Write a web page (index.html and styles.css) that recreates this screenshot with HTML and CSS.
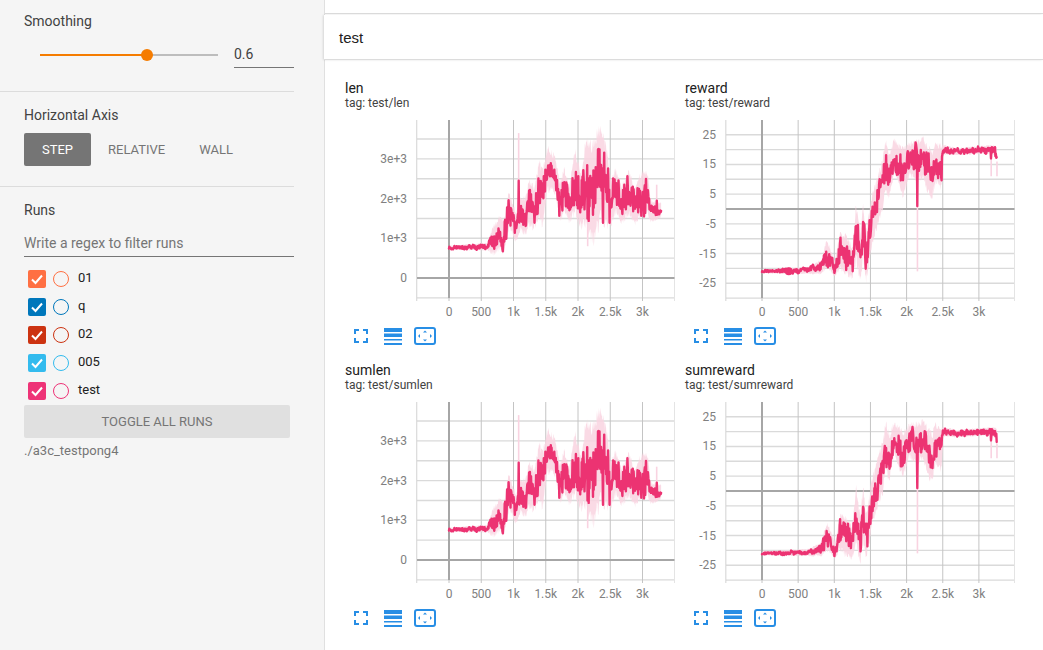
FILE: index.html
```html
<!DOCTYPE html>
<html lang="en">
<head>
    <meta charset="UTF-8">
    <title>TensorBoard</title>
    <link rel="stylesheet" href="styles.css">
</head>
<body>
    <svg class="icon-defs" width="0" height="0">
        <symbol id="icon-fit" viewBox="0 0 14 14">
            <path d="M1 5V1h4M9 1h4v4M13 9v4H9M5 13H1V9" fill="none" stroke="currentColor" stroke-width="2"/>
        </symbol>
        <symbol id="icon-lines" viewBox="0 0 18 17">
            <path d="M0 0h18v4H0zM0 5.5h18v3.5H0zM0 11h18v1.5H0zM0 15h18v2H0z" fill="currentColor"/>
        </symbol>
        <symbol id="icon-zoom" viewBox="0 0 22 18">
            <rect x="1" y="1" width="20" height="16" rx="2" fill="none" stroke="currentColor" stroke-width="2"/>
            <path d="M11 3.5l2 2H9zM11 14.5l2-2H9zM4 9l2-2v4zM18 9l-2-2v4z" fill="currentColor"/>
        </symbol>
    </svg>

    <aside class="sidebar">
        <section class="side-section smoothing">
            <div class="side-label">Smoothing</div>
            <div class="slider-row">
                <div class="slider">
                    <div class="slider-fill"></div>
                    <div class="slider-rest"></div>
                    <div class="slider-knob"></div>
                </div>
                <div class="slider-value">0.6</div>
            </div>
        </section>

        <section class="side-section axis">
            <div class="side-label">Horizontal Axis</div>
            <div class="axis-buttons">
                <div class="axis-btn active">STEP</div>
                <div class="axis-btn">RELATIVE</div>
                <div class="axis-btn">WALL</div>
            </div>
        </section>

        <section class="side-section runs">
            <div class="side-label">Runs</div>
            <div class="run-filter">Write a regex to filter runs</div>
            <div class="run-row run-01">
                <span class="run-check"><svg viewBox="0 0 18 18"><path d="M4 9.5l3.5 3.5L14 5.5"/></svg></span>
                <span class="run-dot"></span>
                <span class="run-name">01</span>
            </div>
            <div class="run-row run-q">
                <span class="run-check"><svg viewBox="0 0 18 18"><path d="M4 9.5l3.5 3.5L14 5.5"/></svg></span>
                <span class="run-dot"></span>
                <span class="run-name">q</span>
            </div>
            <div class="run-row run-02">
                <span class="run-check"><svg viewBox="0 0 18 18"><path d="M4 9.5l3.5 3.5L14 5.5"/></svg></span>
                <span class="run-dot"></span>
                <span class="run-name">02</span>
            </div>
            <div class="run-row run-005">
                <span class="run-check"><svg viewBox="0 0 18 18"><path d="M4 9.5l3.5 3.5L14 5.5"/></svg></span>
                <span class="run-dot"></span>
                <span class="run-name">005</span>
            </div>
            <div class="run-row run-test">
                <span class="run-check"><svg viewBox="0 0 18 18"><path d="M4 9.5l3.5 3.5L14 5.5"/></svg></span>
                <span class="run-dot"></span>
                <span class="run-name">test</span>
            </div>
            <div class="toggle-runs">TOGGLE ALL RUNS</div>
            <div class="log-dir">./a3c_testpong4</div>
        </section>
    </aside>

    <main class="main">
        <div class="top-strip"></div>
        <div class="pane-header">test</div>
        <div class="chart-grid">
            <div class="chart-card">
                <div class="chart-title">len</div>
                <div class="chart-tag">tag: test/len</div>
                <svg class="chart" id="chart-len" width="335" height="208"></svg>
                <div class="chart-tools">
                    <svg class="tool tool-fit"><use href="#icon-fit"/></svg>
                    <svg class="tool tool-lines"><use href="#icon-lines"/></svg>
                    <svg class="tool tool-zoom"><use href="#icon-zoom"/></svg>
                </div>
            </div>
            <div class="chart-card">
                <div class="chart-title">reward</div>
                <div class="chart-tag">tag: test/reward</div>
                <svg class="chart" id="chart-reward" width="335" height="208"></svg>
                <div class="chart-tools">
                    <svg class="tool tool-fit"><use href="#icon-fit"/></svg>
                    <svg class="tool tool-lines"><use href="#icon-lines"/></svg>
                    <svg class="tool tool-zoom"><use href="#icon-zoom"/></svg>
                </div>
            </div>
            <div class="chart-card">
                <div class="chart-title">sumlen</div>
                <div class="chart-tag">tag: test/sumlen</div>
                <svg class="chart" id="chart-sumlen" width="335" height="208"></svg>
                <div class="chart-tools">
                    <svg class="tool tool-fit"><use href="#icon-fit"/></svg>
                    <svg class="tool tool-lines"><use href="#icon-lines"/></svg>
                    <svg class="tool tool-zoom"><use href="#icon-zoom"/></svg>
                </div>
            </div>
            <div class="chart-card">
                <div class="chart-title">sumreward</div>
                <div class="chart-tag">tag: test/sumreward</div>
                <svg class="chart" id="chart-sumreward" width="335" height="208"></svg>
                <div class="chart-tools">
                    <svg class="tool tool-fit"><use href="#icon-fit"/></svg>
                    <svg class="tool tool-lines"><use href="#icon-lines"/></svg>
                    <svg class="tool tool-zoom"><use href="#icon-zoom"/></svg>
                </div>
            </div>
        </div>
    </main>

    <script src="charts.js"></script>
</body>
</html>
```

FILE: styles.css
```css
html, body {
    height: 100%;
}
body {
    margin: 0;
    display: flex;
    overflow: hidden;
    background-color: #fff;
    font-family: Roboto, sans-serif;
    color: #212121;
}
.icon-defs {
    position: absolute;
}

/* sidebar */
.sidebar {
    width: 324px;
    flex: none;
    background-color: #f5f5f5;
    border-right: 1px solid #e0e0e0;
}
.side-section {
    width: 294px;
    box-sizing: border-box;
    padding-left: 24px;
    border-bottom: 1px solid #dcdcdc;
}
.side-label {
    font-size: 14px;
    line-height: 16px;
    color: #424242;
}
.smoothing {
    height: 92px;
    padding-top: 13px;
}
.slider-row {
    display: flex;
    margin-top: 15px;
}
.slider {
    position: relative;
    display: flex;
    align-items: center;
    width: 178px;
    height: 22px;
    margin-left: 16px;
}
.slider-fill {
    width: 107px;
    height: 2px;
    background-color: #f57c00;
}
.slider-rest {
    flex: 1;
    height: 2px;
    background-color: #bdbdbd;
}
.slider-knob {
    position: absolute;
    left: 101px;
    top: 5px;
    width: 12px;
    height: 12px;
    border-radius: 50%;
    background-color: #f57c00;
}
.slider-value {
    width: 60px;
    height: 24px;
    box-sizing: border-box;
    margin-left: 16px;
    font-size: 14px;
    line-height: 20px;
    color: #424242;
    border-bottom: 1px solid #757575;
}
.axis {
    height: 95px;
    padding-top: 15px;
}
.axis-buttons {
    display: flex;
    margin-top: 10px;
}
.axis-btn {
    height: 33px;
    padding: 0 17px;
    font-size: 13px;
    line-height: 34px;
    color: #757575;
    border-radius: 2px;
}
.axis-btn.active {
    width: 67px;
    box-sizing: border-box;
    padding: 0;
    text-align: center;
    background-color: #757575;
    color: #fff;
}
.runs {
    padding-top: 15px;
    border-bottom: none;
}
.run-filter {
    height: 25px;
    box-sizing: border-box;
    margin-top: 14px;
    font-size: 14px;
    line-height: 22px;
    color: #757575;
    border-bottom: 1px solid #757575;
}
.run-filter + .run-row {
    margin-top: 8px;
}
.run-row {
    display: flex;
    align-items: center;
    height: 28px;
    padding-left: 4px;
    font-size: 13px;
}
.run-check {
    width: 18px;
    height: 18px;
    border-radius: 2px;
    background-color: var(--run-color);
}
.run-check svg {
    display: block;
    width: 18px;
    height: 18px;
    fill: none;
    stroke: #fff;
    stroke-width: 2;
}
.run-dot {
    width: 16px;
    height: 16px;
    box-sizing: border-box;
    margin-left: 7px;
    border: 1.5px solid var(--run-color);
    border-radius: 50%;
}
.run-name {
    margin-left: 9px;
    margin-top: -4px;
    color: #212121;
}
.run-01 { --run-color: #ff7043; }
.run-q { --run-color: #0077bb; }
.run-02 { --run-color: #cc3311; }
.run-005 { --run-color: #33bbee; }
.run-test { --run-color: #ee3377; }
.toggle-runs {
    width: 266px;
    height: 33px;
    font-size: 13px;
    line-height: 34px;
    text-align: center;
    color: #757575;
    background-color: #e0e0e0;
    border-radius: 2px;
}
.log-dir {
    margin-top: 5px;
    font-size: 13px;
    line-height: 16px;
    color: #757575;
}

/* main area */
.main {
    flex: 1;
    min-width: 0;
}
.top-strip {
    height: 13px;
    border-bottom: 1px solid #dcdcdc;
}
.pane-header {
    height: 44px;
    margin-top: 1px;
    margin-left: -1px;
    padding-left: 15px;
    font-family: "Liberation Sans", Arial, sans-serif;
    font-size: 15px;
    line-height: 46px;
    background-color: #fff;
    border-bottom: 1px solid #dcdcdc;
    box-shadow: -1px 0 2px rgba(0, 0, 0, 0.12);
}
.chart-grid {
    display: grid;
    grid-template-columns: 340px 340px;
    grid-auto-rows: 282px;
    padding: 20px 0 0 20px;
}
.chart-title {
    font-size: 14px;
    line-height: 16px;
}
.chart-tag {
    font-size: 12px;
    line-height: 14px;
    color: #424242;
}
.chart {
    display: block;
    margin-top: 2px;
}
.chart text {
    font-family: Roboto, sans-serif;
    font-size: 12px;
    fill: #808080;
}
.chart-tools {
    display: flex;
    align-items: center;
    height: 18px;
    margin-top: 7px;
    color: #288ee5;
}
.tool {
    flex: none;
}
.tool-fit {
    width: 14px;
    height: 14px;
    margin-left: 9px;
}
.tool-lines {
    width: 18px;
    height: 17px;
    margin-left: 16px;
}
.tool-zoom {
    width: 22px;
    height: 18px;
    margin-left: 12px;
}
```

FILE: charts.js
```js
// draws the four scalar charts, curves are generated from rough key points
const LINE = '#ec3372';
const PALE = '#f9d3e1';

const lenShape = {
    keys: [
        [0, 760, 25, 40], [600, 790, 40, 70], [680, 950, 130, 260], [730, 1000, 180, 280],
        [780, 1150, 200, 320], [850, 1000, 180, 300], [930, 1750, 230, 340], [1040, 1250, 130, 270],
        [1100, 1600, 170, 300], [1180, 1550, 170, 350], [1250, 1900, 260, 420], [1320, 1750, 240, 400],
        [1400, 2250, 320, 520], [1450, 2000, 330, 520], [1530, 2750, 140, 420], [1650, 2600, 150, 340],
        [1720, 1900, 280, 380], [1790, 2250, 300, 400], [1860, 1850, 220, 340], [1950, 2450, 420, 600],
        [2040, 1950, 330, 520], [2130, 2450, 520, 800], [2220, 2100, 420, 950], [2350, 2650, 520, 900],
        [2440, 2350, 520, 750], [2510, 1850, 260, 420], [2580, 2200, 280, 420], [2680, 1850, 220, 350],
        [2790, 2150, 280, 420], [2880, 1800, 200, 340], [2980, 2100, 300, 420], [3080, 2150, 240, 380],
        [3130, 1680, 90, 200], [3290, 1720, 80, 140]
    ],
    spikes: [[1080, 3650, 2450], [2150, 800, 1500], [3220, 2350, 1950]]
};

const rewardShape = {
    keys: [
        [0, -21, 0.3, 0.5], [650, -20.7, 0.5, 0.9], [820, -19.5, 1, 1.8], [895, -15, 2, 3.5],
        [1010, -20, 1.2, 2], [1080, -14, 2.8, 4.5], [1150, -15, 3, 5], [1250, -18, 2.5, 4],
        [1300, -8, 4, 7], [1360, -16, 3, 6], [1400, -7, 3.5, 7], [1440, -16, 3.5, 6],
        [1520, -4, 3, 6], [1600, 3, 3, 6], [1670, 8, 3, 6.5], [1710, 15, 3.5, 6],
        [1760, 11, 3, 6], [1830, 18, 2.5, 4], [1950, 12, 3.5, 6], [2040, 17, 2.5, 4],
        [2120, 16, 3, 5], [2230, 17, 2.5, 5], [2300, 13, 3.5, 6], [2350, 11, 2.5, 6],
        [2400, 16, 2.5, 5], [2480, 14, 3, 5.5], [2510, 20, 0.7, 1.2], [2700, 19.3, 0.6, 0.9],
        [3180, 20.2, 0.7, 1], [3250, 19, 1.3, 1.5]
    ],
    spikes: [[2150, -21, 1], [3170, 11, 17], [3250, 11, 16]]
};

const lenAxis = { xLeft: 72, xZero: 104, xScale: 0.0645, yZero: 166, yScale: 0.0397, yStep: 500, yFrom: -500, yTo: 3500, yFirst: 0, yEvery: 1000, yLabel: v => v === 0 ? '0' : v / 1000 + 'e+3' };
const rewardAxis = { xLeft: 41, xZero: 77, xScale: 0.0723, yZero: 97, yScale: 2.97, yStep: 5, yFrom: -30, yTo: 25, yFirst: -25, yEvery: 10, yLabel: v => String(v) };

const charts = [
    { id: 'chart-len', shape: lenShape, seed: 11, axis: lenAxis },
    { id: 'chart-reward', shape: rewardShape, seed: 23, axis: rewardAxis, marker: [370, -21] },
    { id: 'chart-sumlen', shape: lenShape, seed: 11, axis: lenAxis },
    { id: 'chart-sumreward', shape: rewardShape, seed: 24, axis: rewardAxis }
];

const X_LABELS = ['0', '500', '1k', '1.5k', '2k', '2.5k', '3k'];
const RIGHT = 329.5;
const TOP = 8;
const BOTTOM = 186;

function makeRandom(seed) {
    let s = seed * 2654435761 % 4294967296;
    return () => {
        s = (s * 1664525 + 1013904223) % 4294967296;
        return s / 4294967296;
    };
}

function sample(keys, step) {
    for (let i = 1; i < keys.length; i++) {
        if (step <= keys[i][0]) {
            const a = keys[i - 1], b = keys[i];
            const t = (step - a[0]) / (b[0] - a[0]);
            return [a[1] + (b[1] - a[1]) * t, a[2] + (b[2] - a[2]) * t, a[3] + (b[3] - a[3]) * t];
        }
    }
    return keys[keys.length - 1].slice(1);
}

function line(x1, y1, x2, y2, color, width) {
    return `<line x1="${x1}" y1="${y1}" x2="${x2}" y2="${y2}" stroke="${color}" stroke-width="${width}"/>`;
}

function drawChart(c) {
    const rand = makeRandom(c.seed);
    const a = c.axis;
    const toX = step => a.xZero + step * a.xScale;
    const toY = v => a.yZero - v * a.yScale;
    const keys = c.shape.keys;
    const end = keys[keys.length - 1][0];
    let out = '';

    // grid
    for (let v = a.yFrom; v <= a.yTo; v += a.yStep) {
        out += line(a.xLeft, toY(v), RIGHT, toY(v), '#dadada', 1.4);
    }
    for (let s = -500; s <= 3000; s += 500) {
        out += line(toX(s), TOP, toX(s), BOTTOM + 3, s === -500 ? '#d2d2d2' : '#c4c4c4', 1);
    }
    out += line(RIGHT, TOP, RIGHT, BOTTOM + 3, '#e4e4e4', 1);
    out += line(a.xLeft, toY(0), RIGHT, toY(0), '#a6a6a6', 2);
    out += line(toX(0), TOP, toX(0), BOTTOM, '#a6a6a6', 2);

    // axis labels
    X_LABELS.forEach((label, i) => {
        out += `<text x="${toX(i * 500)}" y="${BOTTOM + 18}" text-anchor="middle">${label}</text>`;
    });
    for (let v = a.yFirst; v <= a.yTo; v += a.yEvery) {
        out += `<text x="${a.xLeft - 10}" y="${toY(v) + 4}" text-anchor="end">${a.yLabel(v)}</text>`;
    }

    // curves
    const upper = [], lower = [], dark = [];
    let slow = 0;
    for (let s = 0; s <= end; s += 6) {
        const [mid, amp, paleAmp] = sample(keys, s);
        slow = slow * 0.75 + (rand() * 2 - 1) * 0.4;
        let y = mid + amp * (slow * 1.2 + (rand() * 2 - 1) * 1.25);
        c.shape.spikes.forEach(sp => {
            if (Math.abs(sp[0] - s) < 4) y = sp[2];
        });
        const x = toX(s).toFixed(1);
        dark.push(`${x},${toY(y).toFixed(1)}`);
        upper.push(`${x},${toY(mid + paleAmp * (1 + rand() * 0.5)).toFixed(1)}`);
        lower.unshift(`${x},${toY(mid - paleAmp * (1 + rand() * 0.5)).toFixed(1)}`);
    }
    out += `<polygon points="${upper.concat(lower).join(' ')}" fill="${PALE}" fill-opacity="0.85"/>`;
    c.shape.spikes.forEach(sp => {
        out += line(toX(sp[0]), toY(sp[2]), toX(sp[0]), toY(sp[1]), PALE, 1.6);
    });
    out += `<polyline points="${dark.join(' ')}" fill="none" stroke="${LINE}" stroke-width="2.4" stroke-linejoin="round" stroke-linecap="round"/>`;
    if (c.marker) {
        out += `<circle cx="${toX(c.marker[0])}" cy="${toY(c.marker[1])}" r="4" fill="${LINE}"/>`;
    }

    document.getElementById(c.id).innerHTML = out;
}

charts.forEach(drawChart);
```
